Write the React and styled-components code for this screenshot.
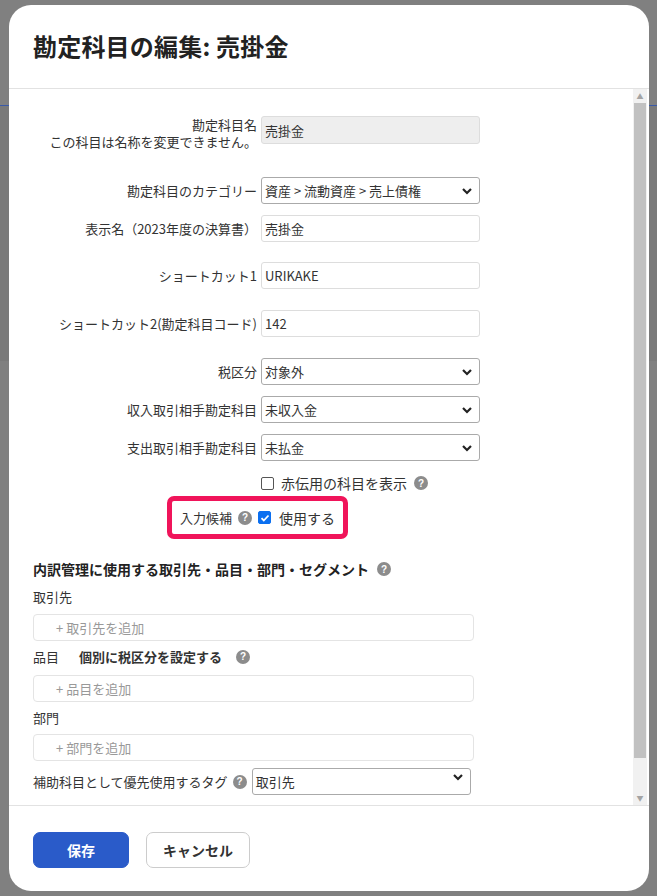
import React from "react";
import styled, { createGlobalStyle } from "styled-components";

const G = createGlobalStyle`
  html,body{margin:0;padding:0;}
  body{font-family:"Noto Sans CJK JP","Liberation Sans",sans-serif;background:#7f7f7f;width:657px;height:896px;overflow:hidden;}
  *{box-sizing:border-box;}
`;
const Page = styled.div`position:relative;width:657px;height:896px;background:#808080;`;
const BgLine = styled.div`position:absolute;left:0;right:0;top:${p=>p.$t}px;height:${p=>p.$h||1}px;background:${p=>p.$c};`;
const Modal = styled.div`
  position:absolute;left:9px;top:5px;width:640px;height:886px;background:#fff;border-radius:22px;
  display:flex;flex-direction:column;overflow:hidden;
`;
const Header = styled.div`height:84px;flex:none;border-bottom:1px solid #e2e2e2;padding:23px 0 0 24px;`;
const Title = styled.h1`margin:0;font-size:24px;font-weight:700;color:#222;letter-spacing:0.2px;`;
const Middle = styled.div`flex:1;display:flex;min-height:0;`;
const Body = styled.div`flex:1;overflow:hidden;padding:27px 0 0 24px;color:#333;font-size:13px;`;
const Track = styled.div`width:14px;margin-right:2px;background:#f1f1f1;display:flex;flex-direction:column;align-items:center;`;
const Arrow = styled.div`height:14px;display:flex;align-items:center;justify-content:center;font-size:7px;color:#a3a3a3;`;
const Thumb = styled.div`width:12px;height:${p=>p.$h}px;background:#c1c1c1;`;
const Row = styled.div`display:flex;align-items:${p=>p.$top?"flex-start":"center"};gap:4px;margin-bottom:${p=>p.$mb??10}px;`;
const Label = styled.div`width:224px;text-align:right;line-height:17px;color:#333;`;
const Field = styled.div`
  width:219px;height:${p=>p.$h||27}px;border:1px solid ${p=>p.$sel?"#aaa":"#ddd"};border-radius:3px;
  background:${p=>p.$dis?"#eee":"#fff"};display:flex;align-items:center;justify-content:space-between;padding:0 6px 0 3px;
  font-size:13px;color:#333;
`;
const Chev = () => (<svg width="12" height="10" viewBox="0 0 12 10"><path d="M2 3l4 4 4-4" stroke="#222" strokeWidth="2.2" fill="none"/></svg>);
const Help = styled.span`display:inline-flex;width:14px;height:14px;border-radius:50%;background:#8c8c8c;color:#fff;font-size:10px;font-weight:700;align-items:center;justify-content:center;font-family:"Liberation Sans",sans-serif;`;
const Box = styled.span`display:inline-flex;width:13px;height:13px;border:1px solid #555;border-radius:2px;background:${p=>p.$on?"#0b6ff0":"#fff"};border-color:${p=>p.$on?"#0b6ff0":"#555"};align-items:center;justify-content:center;`;
const CheckRow = styled.div`display:flex;align-items:center;gap:7px;padding-left:228px;font-size:14px;margin-bottom:3px;`;
const Highlight = styled.div`margin-left:134px;width:181px;height:43px;border:5px solid #f0145a;border-radius:7px;display:flex;align-items:center;gap:6px;padding-left:8px;font-size:13px;`;
const Section = styled.div`margin-top:20px;font-weight:700;font-size:14px;display:flex;align-items:center;gap:8px;color:#222;`;
const Sub = styled.div`margin-top:${p=>p.$mt||12}px;font-size:13px;display:flex;align-items:center;gap:20px;`;
const Bold = styled.span`font-weight:700;font-size:13px;display:inline-flex;gap:14px;align-items:center;`;
const Tag = styled.div`margin-top:${p=>p.$mt||10}px;width:441px;height:27px;border:1px solid #e4e4e4;border-radius:4px;padding-left:22px;display:flex;align-items:center;color:#999;font-size:13px;`;
const TagRow = styled.div`margin-top:7px;display:flex;align-items:center;gap:5px;padding-bottom:12px;`;
const SelSmall = styled(Field)`align-items:flex-start;padding-top:3px;`;
const Footer = styled.div`height:86px;flex:none;border-top:1px solid #e2e2e2;display:flex;gap:17px;padding:26px 0 0 24px;`;
const Btn = styled.button`
  height:36px;width:${p=>p.$w}px;border-radius:7px;font-family:inherit;font-size:14px;font-weight:700;
  background:${p=>p.$primary?"#2a5bc9":"#fff"};color:${p=>p.$primary?"#fff":"#333"};
  border:1px solid ${p=>p.$primary?"#2a5bc9":"#ccc"};
`;
const tick = <svg width="10" height="10" viewBox="0 0 10 10"><path d="M1.5 5.2l2.3 2.3L8.5 2.5" stroke="#fff" strokeWidth="1.8" fill="none"/></svg>;

const sel = (label, val, mb) => (
  <Row $mb={mb}><Label>{label}</Label><Field $sel>{val}<Chev/></Field></Row>
);
const txt = (label, val, mb) => (
  <Row $mb={mb}><Label>{label}</Label><Field>{val}</Field></Row>
);

export default function App(){
  return (<Page><G/>
    <BgLine $t={105} $c="#3a5aa8"/>
    <BgLine $t={106} $h={255} $c="#7a7a7a"/>
    <Modal>
      <Header><Title>勘定科目の編集: 売掛金</Title></Header>
      <Middle>
        <Body>
          <Row $top $mb={27}><Label>勘定科目名<br/>この科目は名称を変更できません。</Label><Field $dis $h={28}>売掛金</Field></Row>
          {sel("勘定科目のカテゴリー","資産 > 流動資産 > 売上債権",11)}
          {txt("表示名（2023年度の決算書）","売掛金",20)}
          {txt("ショートカット1","URIKAKE",21)}
          {txt("ショートカット2(勘定科目コード)","142",21)}
          {sel("税区分","対象外",11)}
          {sel("収入取引相手勘定科目","未収入金",11)}
          {sel("支出取引相手勘定科目","未払金",12)}
          <CheckRow><Box/>赤伝用の科目を表示<Help>?</Help></CheckRow>
          <Highlight>入力候補<Help>?</Help><Box $on>{tick}</Box><span style={{fontSize:14,marginLeft:2}}>使用する</span></Highlight>
          <Section>内訳管理に使用する取引先・品目・部門・セグメント<Help>?</Help></Section>
          <Sub $mt={8}>取引先</Sub>
          <Tag $mt={8}>+ 取引先を追加</Tag>
          <Sub $mt={6}>品目<Bold>個別に税区分を設定する<Help>?</Help></Bold></Sub>
          <Tag $mt={9}>+ 品目を追加</Tag>
          <Sub $mt={6}>部門</Sub>
          <Tag $mt={7}>+ 部門を追加</Tag>
          <TagRow>補助科目として優先使用するタグ<Help>?</Help><SelSmall $sel>取引先<Chev/></SelSmall></TagRow>
        </Body>
        <Track>
          <Arrow>▲</Arrow>
          <Thumb $h={655}/>
          <div style={{flex:1}}/>
          <Arrow>▼</Arrow>
        </Track>
      </Middle>
      <Footer><Btn $primary $w={96}>保存</Btn><Btn $w={104}>キャンセル</Btn></Footer>
    </Modal>
  </Page>);
}
